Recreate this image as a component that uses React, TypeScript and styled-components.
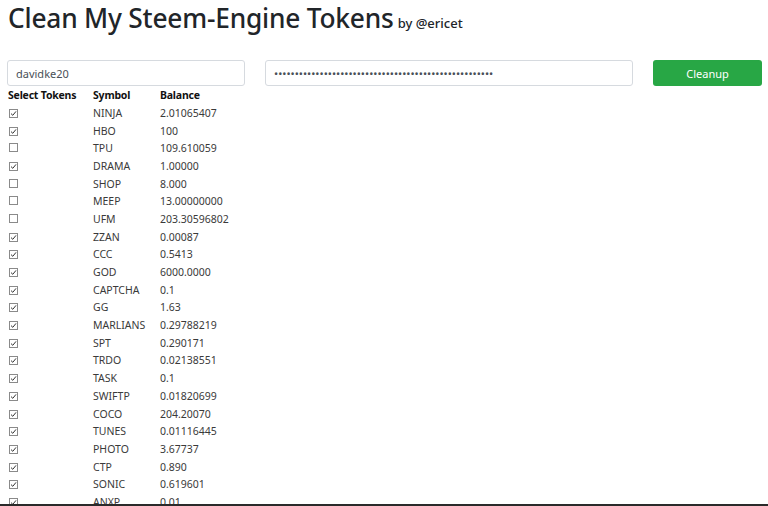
import React from "react";
import styled, { createGlobalStyle } from "styled-components";

const Global = createGlobalStyle`
  html, body { margin: 0; padding: 0; background: #fff; }
  body { font-family: "Noto Sans", "Open Sans", sans-serif; color: #212529; overflow: hidden; }
  * { box-sizing: border-box; }
`;

const Page = styled.div`
  padding: 0 5px 0 8px;
  height: 506px;
  overflow: hidden;
`;

const TitleRow = styled.div`
  display: flex;
  align-items: baseline;
  gap: 4px;
  height: 60px;
  padding-top: 1px;
`;

const Title = styled.h1`
  margin: 0;
  font-size: 26.3px;
  font-weight: 500;
  letter-spacing: -0.2px;
  color: #212529;
  line-height: 34px;
`;

const By = styled.span`
  font-size: 13px;
  font-weight: 500;
  color: #212529;
`;

const FormRow = styled.div`
  display: grid;
  grid-template-columns: 238px 368px 109px;
  column-gap: 20px;
  margin-left: -1px;
`;

const Input = styled.input`
  height: 26px;
  border: 1px solid #d6dadf;
  border-radius: 3px;
  padding: 0 8px;
  font-family: "Noto Sans", sans-serif;
  font-size: 11px;
  color: #495057;
  outline: none;
  &::placeholder { color: #6c757d; }
`;

const Button = styled.button`
  height: 26px;
  border: none;
  border-radius: 3px;
  background: #28a745;
  color: #fff;
  font-family: "Noto Sans", sans-serif;
  font-size: 11px;
`;

const Table = styled.div`
  margin-top: 0;
  font-size: 10.5px;
`;

const Row = styled.div<{ $head?: boolean }>`
  display: grid;
  grid-template-columns: 85px 67px 1fr;
  height: ${(p) => (p.$head ? "18px" : "17.7px")};
  align-items: center;
  color: ${(p) => (p.$head ? "#111" : "#3a3a3a")};
  font-weight: ${(p) => (p.$head ? 700 : 400)};
  letter-spacing: ${(p) => (p.$head ? "-0.2px" : "0")};
`;

const Box = styled.span`
  width: 9px;
  height: 9px;
  border: 1px solid #8a8a8a;
  display: inline-flex;
  align-items: center;
  justify-content: center;
  background: #fff;
  margin-left: 1px;
`;

const BottomBar = styled.div`
  position: fixed;
  left: 0;
  right: 0;
  bottom: 0;
  height: 2px;
  background: #2a2a2a;
`;

const Check = ({ on }: { on: boolean }) => (
  <Box>
    {on && (
      <svg width="7" height="7" viewBox="0 0 7 7">
        <path d="M1 3.6 L2.8 5.3 L6 1.4" fill="none" stroke="#333" strokeWidth="1" />
      </svg>
    )}
  </Box>
);

const tokens: [string, string, boolean][] = [
  ["NINJA", "2.01065407", true],
  ["HBO", "100", true],
  ["TPU", "109.610059", false],
  ["DRAMA", "1.00000", true],
  ["SHOP", "8.000", false],
  ["MEEP", "13.00000000", false],
  ["UFM", "203.30596802", false],
  ["ZZAN", "0.00087", true],
  ["CCC", "0.5413", true],
  ["GOD", "6000.0000", true],
  ["CAPTCHA", "0.1", true],
  ["GG", "1.63", true],
  ["MARLIANS", "0.29788219", true],
  ["SPT", "0.290171", true],
  ["TRDO", "0.02138551", true],
  ["TASK", "0.1", true],
  ["SWIFTP", "0.01820699", true],
  ["COCO", "204.20070", true],
  ["TUNES", "0.01116445", true],
  ["PHOTO", "3.67737", true],
  ["CTP", "0.890", true],
  ["SONIC", "0.619601", true],
  ["ANXP", "0.01", true],
];

export default function App() {
  return (
    <>
      <Global />
      <Page>
        <TitleRow>
          <Title>Clean My Steem-Engine Tokens</Title>
          <By>by @ericet</By>
        </TitleRow>
        <FormRow>
          <Input defaultValue="davidke20" />
          <Input type="password" defaultValue="5KabcdefghijklmnopqrstuvwxyzABCDEFGHIJKLMNOPQRSTUVWXY" />
          <Button>Cleanup</Button>
        </FormRow>
        <Table>
          <Row $head>
            <span>Select Tokens</span>
            <span>Symbol</span>
            <span>Balance</span>
          </Row>
          {tokens.map(([s, b, on]) => (
            <Row key={s}>
              <span><Check on={on} /></span>
              <span>{s}</span>
              <span>{b}</span>
            </Row>
          ))}
        </Table>
      </Page>
      <BottomBar />
    </>
  );
}
